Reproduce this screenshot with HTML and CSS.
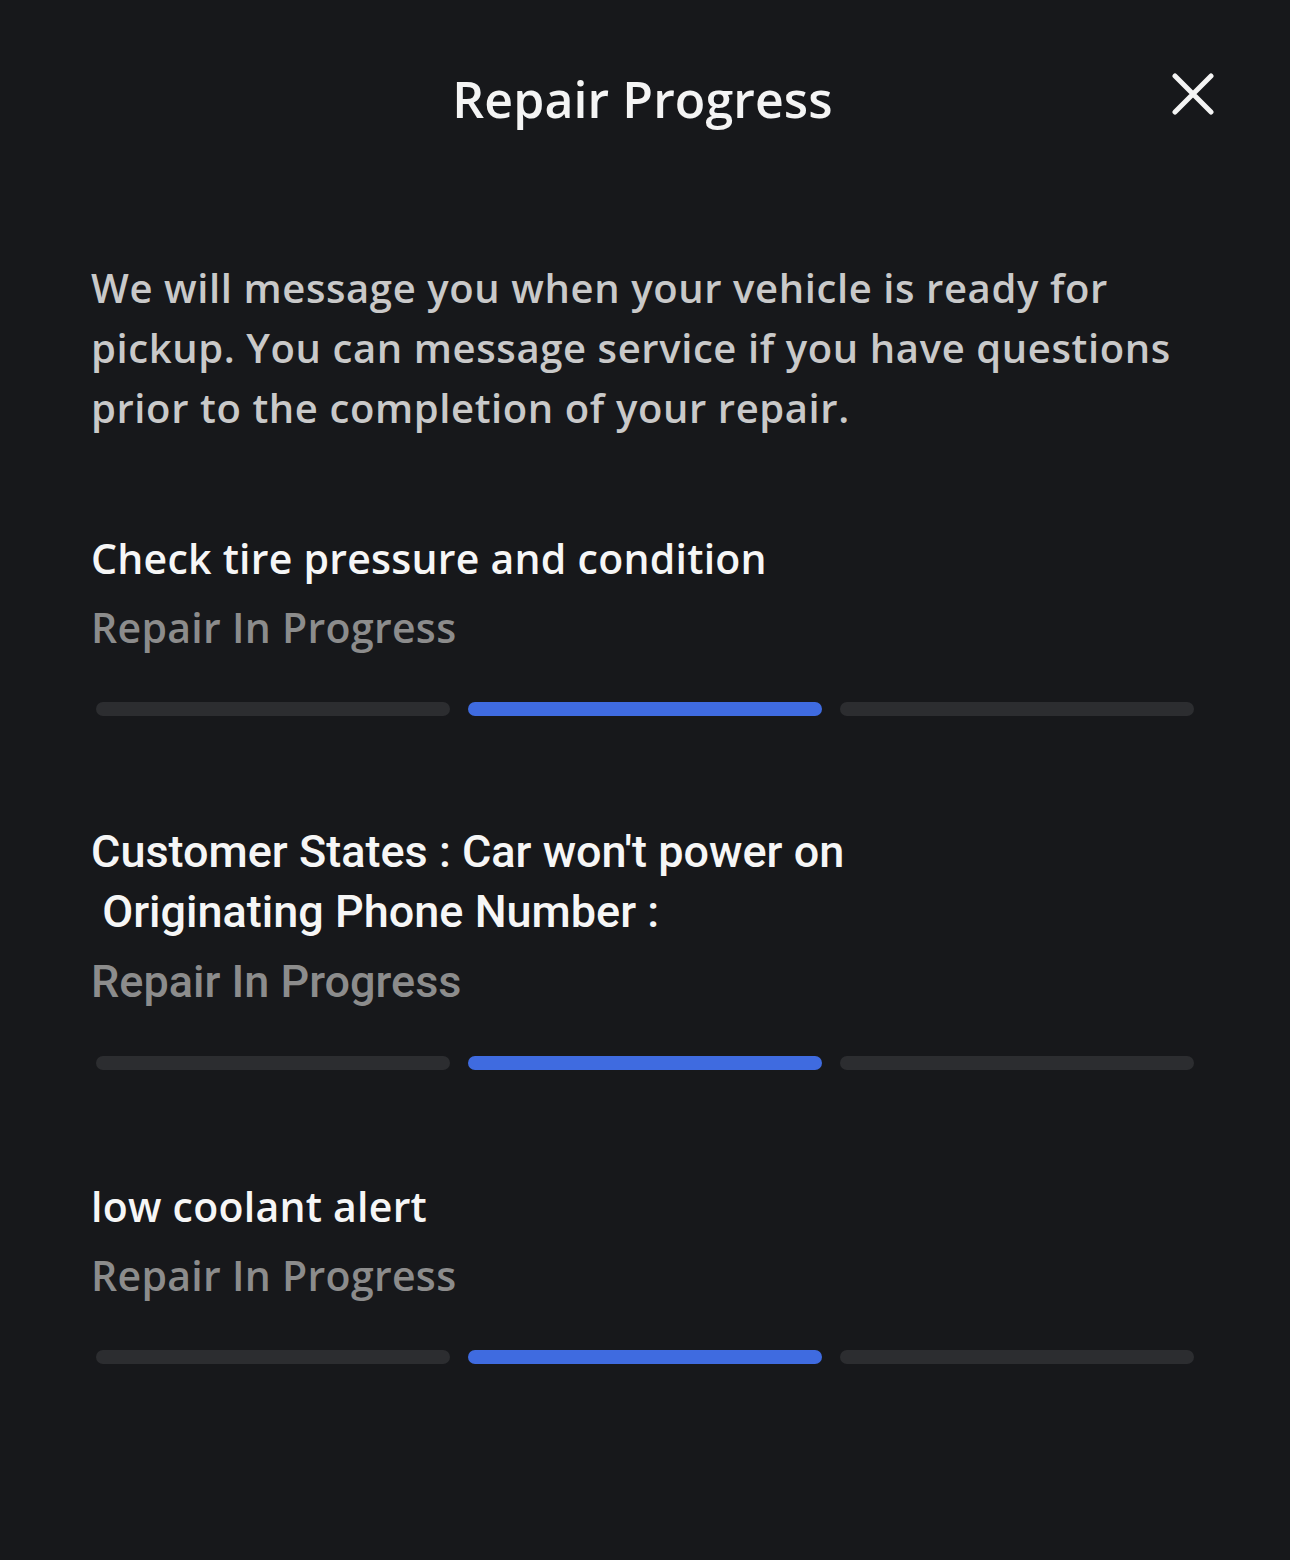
FILE: index.html
```html
<!DOCTYPE html>
<html lang="en">
<head>
<meta charset="utf-8">
<title>Repair Progress</title>
<link rel="stylesheet" href="styles.css">
</head>
<body>
<div class="screen">
  <header class="header">
    <h1 class="title">Repair Progress</h1>
    <button class="close" aria-label="Close">
      <svg viewBox="0 0 42 42" width="42" height="42"><path d="M3 3 L39 39 M39 3 L3 39" stroke="#f4f4f4" stroke-width="5" stroke-linecap="round" fill="none"/></svg>
    </button>
  </header>
  <p class="intro">We will message you when your vehicle is ready for pickup. You can message service if you have questions prior to the completion of your repair.</p>

  <section class="item">
    <h2 class="item-title">Check tire pressure and condition</h2>
    <div class="status">Repair In Progress</div>
    <div class="bars"><span class="bar"></span><span class="bar active"></span><span class="bar"></span></div>
  </section>

  <section class="item item-condensed">
    <h2 class="item-title condensed">Customer States : Car won't power on<br>&nbsp;Originating Phone Number :</h2>
    <div class="status condensed">Repair In Progress</div>
    <div class="bars"><span class="bar"></span><span class="bar active"></span><span class="bar"></span></div>
  </section>

  <section class="item">
    <h2 class="item-title">low coolant alert</h2>
    <div class="status">Repair In Progress</div>
    <div class="bars"><span class="bar"></span><span class="bar active"></span><span class="bar"></span></div>
  </section>
</div>
</body>
</html>
```
FILE: styles.css
```css
html, body {
  margin: 0;
  padding: 0;
  background: #17181b;
}
body {
  font-family: "Open Sans", "Liberation Sans", sans-serif;
  color: #f4f4f4;
  width: 1290px;
  height: 1560px;
  overflow: hidden;
}
.screen {
  padding: 0 96px 0 91px;
}
.header {
  position: relative;
  height: 200px;
  display: flex;
  justify-content: center;
}
.title {
  margin: 64px 0 0;
  font-size: 50px;
  font-weight: 600;
  line-height: 70px;
  letter-spacing: 0.1px;
  color: #f4f4f4;
}
.close {
  position: absolute;
  right: -20px;
  top: 73px;
  background: none;
  border: 0;
  padding: 0;
  width: 42px;
  height: 42px;
}
.close svg { display: block; }
.intro {
  margin: 58px 0 0;
  font-size: 40px;
  line-height: 60px;
  font-weight: 600;
  color: #c9c9c9;
  letter-spacing: 0.6px;
}
.item {
  margin-top: 90px;
}
.item + .item {
  margin-top: 106px;
}
.item-title {
  margin: 0;
  font-size: 41px;
  line-height: 60px;
  font-weight: 600;
  letter-spacing: 0.25px;
  color: #f6f6f6;
}
.status {
  margin-top: 9px;
  font-size: 41px;
  line-height: 60px;
  font-weight: 600;
  letter-spacing: 0.3px;
  color: #8c8c8c;
}
.bars {
  margin-top: 45px;
  padding-left: 5px;
  display: grid;
  grid-template-columns: repeat(3, 354px);
  gap: 18px;
}
.condensed {
  font-family: Roboto, "Liberation Sans", sans-serif;
  font-weight: 500;
  font-size: 45px;
  letter-spacing: 0;
}
.status.condensed {
  margin-top: 10px;
}
.item-condensed .bars {
  margin-top: 44px;
}
.bar {
  height: 14px;
  border-radius: 7px;
  background: #2c2d30;
}
.bar.active {
  background: #3f6be0;
}
```
